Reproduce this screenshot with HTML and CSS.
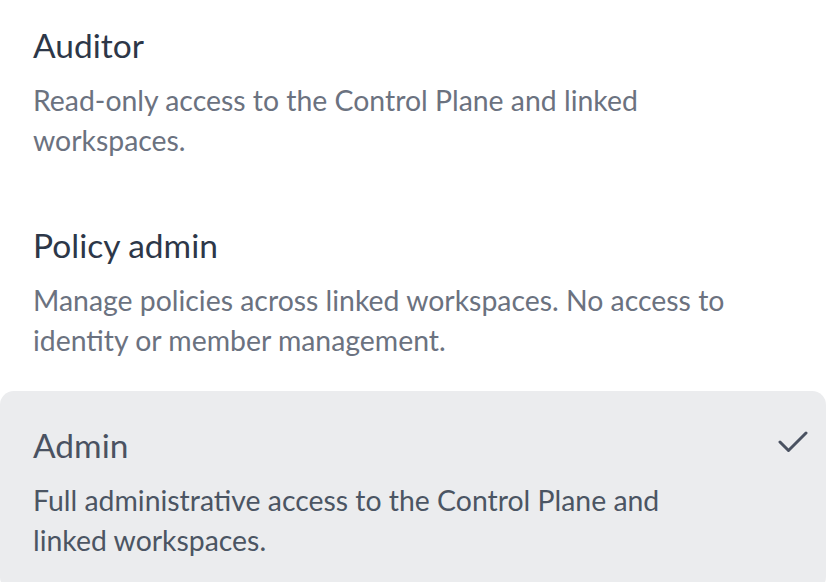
FILE: index.html
```html
<!DOCTYPE html>
<html lang="en">
<head>
    <meta charset="UTF-8">
    <meta name="viewport" content="width=device-width, initial-scale=1.0">
    <title>Roles</title>
    <link rel="stylesheet" href="styles.css">
</head>
<body>
    <ul class="role-list">
        <li class="role-option">
            <div class="role-text">
                <div class="role-name">Auditor</div>
                <div class="role-desc">Read-only access to the Control Plane and linked workspaces.</div>
            </div>
        </li>
        <li class="role-option">
            <div class="role-text">
                <div class="role-name">Policy admin</div>
                <div class="role-desc">Manage policies across linked workspaces. No access to identity or member management.</div>
            </div>
        </li>
        <li class="role-option selected">
            <div class="role-text">
                <div class="role-name">Admin</div>
                <div class="role-desc">Full administrative access to the Control Plane and linked workspaces.</div>
            </div>
            <svg class="check" width="30" height="22" viewBox="0 0 30 22" fill="none">
                <polyline points="2,11 10.5,19.5 28,2" stroke="currentColor" stroke-width="3" stroke-linecap="round" stroke-linejoin="round"/>
            </svg>
        </li>
    </ul>
</body>
</html>
```
FILE: styles.css
```css
body {
    margin: 0;
    padding: 0;
    background-color: #fff;
    font-family: Lato, 'Liberation Sans', sans-serif;
    overflow: hidden;
}
.role-list {
    list-style: none;
    margin: -9px 2px 0 0;
    padding: 0;
}
.role-option {
    display: flex;
    align-items: flex-start;
    height: 200px;
    box-sizing: border-box;
    padding: 30px 18px 0 33px;
    border-radius: 14px;
}
.role-text {
    flex: 1;
    max-width: 700px;
}
.role-name {
    font-size: 33.5px;
    line-height: 48px;
    color: #2d3748;
}
.role-desc {
    margin-top: 11px;
    font-size: 28.4px;
    line-height: 40px;
    color: #6b7280;
}
.role-option.selected {
    background-color: #ebecee;
}
.role-option.selected .role-name {
    color: #4a5261;
}
.role-option.selected .role-desc {
    color: #4b5563;
}
.check {
    margin-left: auto;
    margin-top: 10px;
    color: #4a5261;
}
```
